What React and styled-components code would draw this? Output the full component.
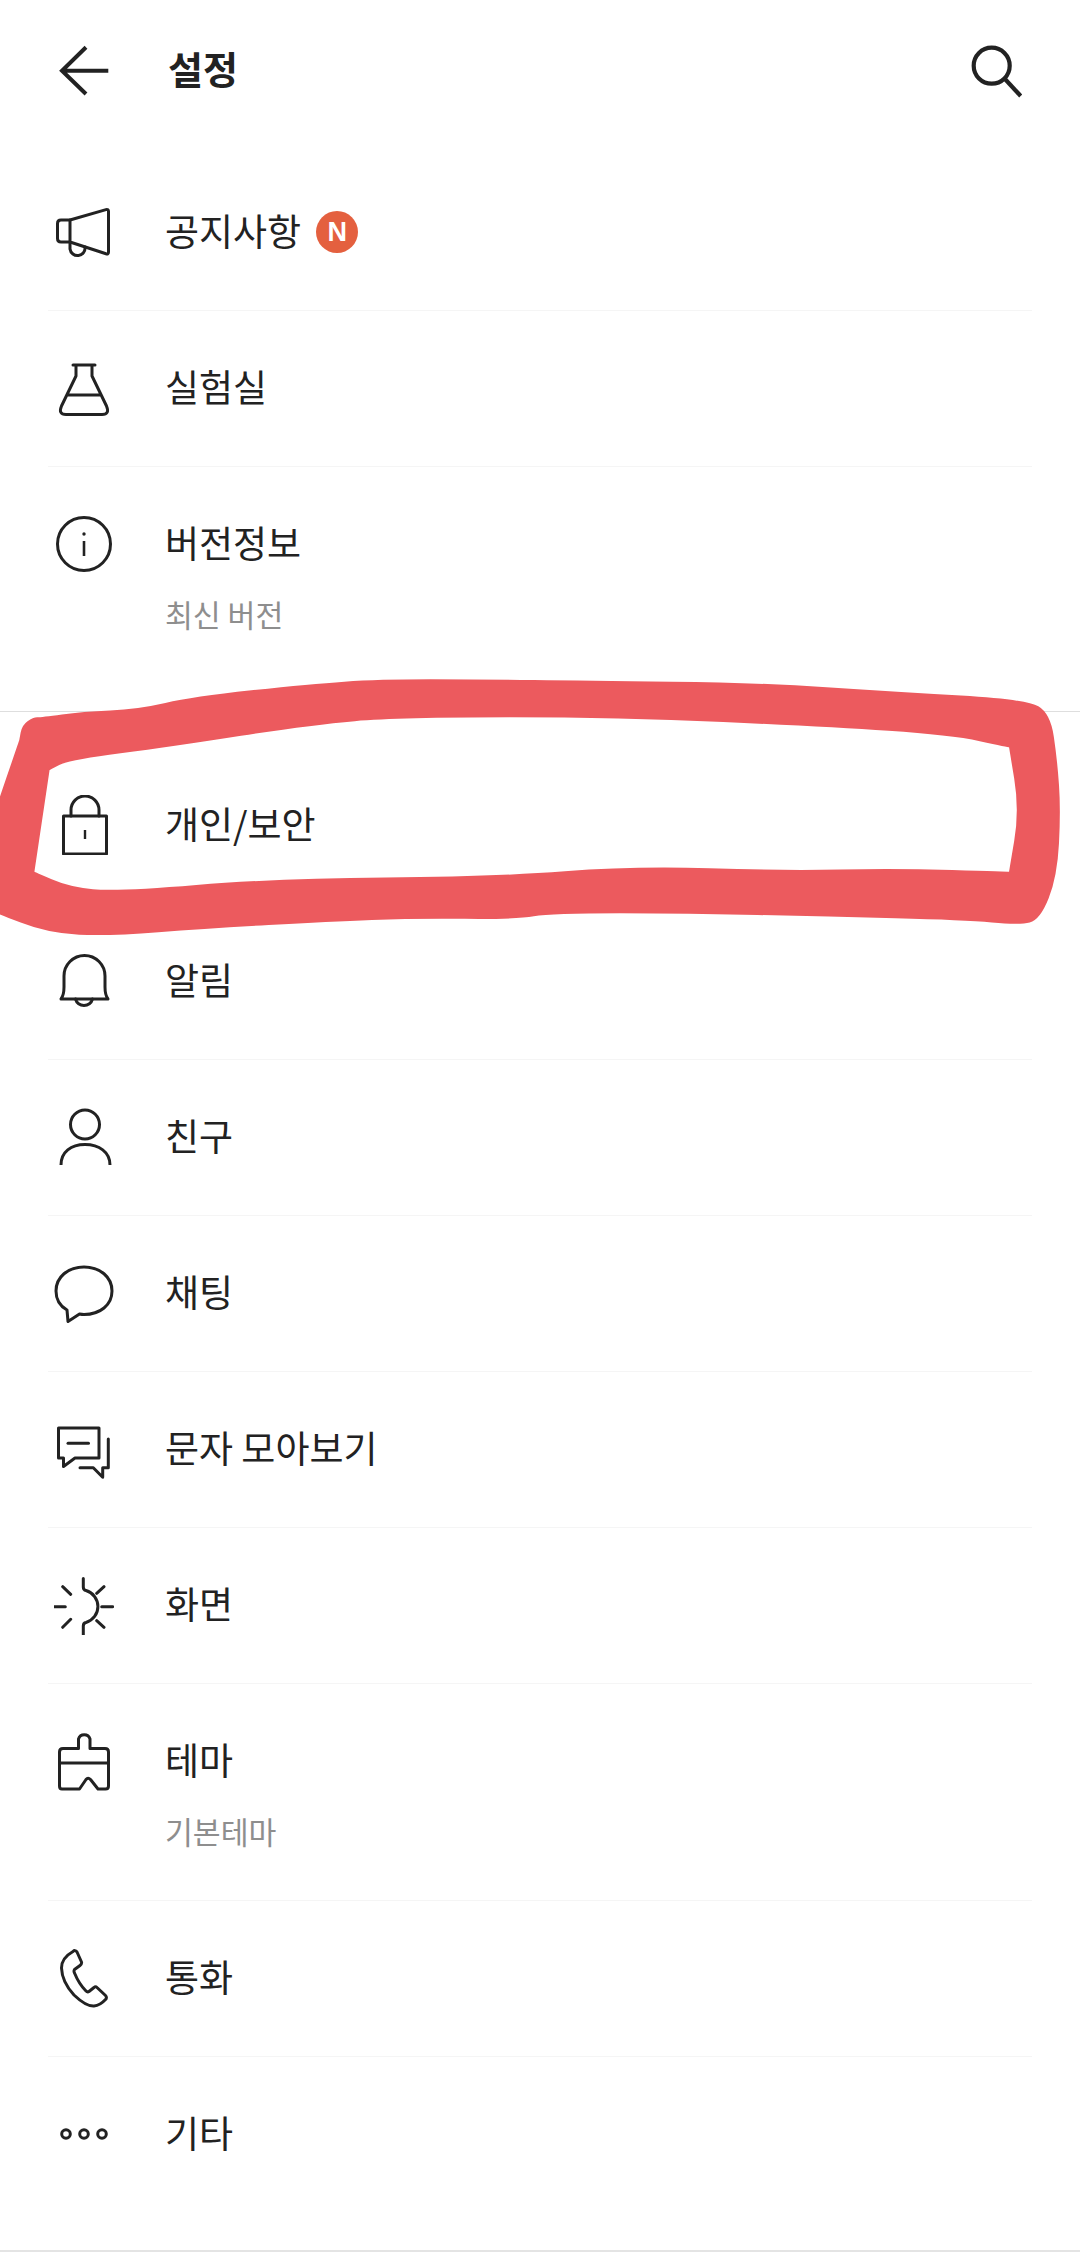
import React from "react";
import styled, { createGlobalStyle } from "styled-components";

const Global = createGlobalStyle`
  html, body { margin: 0; padding: 0; background: #fff; }
  body { font-family: "Noto Sans CJK KR", "Noto Sans", sans-serif; color: #222; }
`;

const Page = styled.div`
  position: relative;
  width: 1080px;
  height: 2257px;
  overflow: hidden;
  background: #fff;
`;

const Header = styled.header`
  display: flex;
  align-items: center;
  height: 140px;
  padding: 0 58px 0 54px;
  box-sizing: border-box;
`;

const HeaderTitle = styled.h1`
  flex: 1;
  margin: 0 0 4px 54px;
  font-size: 38px;
  line-height: 60px;
  font-weight: 700;
  color: #222;
`;

const Section = styled.section`
  padding: ${(p) => p.$top}px 48px ${(p) => p.$bottom}px;
  border-bottom: ${(p) => p.$line}px solid ${(p) => p.$lineColor};
`;

const Row = styled.div`
  display: flex;
  align-items: flex-start;
  box-sizing: border-box;
  height: ${(p) => (p.$sub ? 217 : 156)}px;
  padding: 47px 0 0 6px;
  border-bottom: ${(p) => (p.$last ? "none" : "1px solid #f5f5f5")};
`;

const Icon = styled.svg`
  flex: none;
  width: 60px;
  height: 60px;
  fill: none;
  stroke: #222;
  stroke-width: 3;
  stroke-linecap: round;
  stroke-linejoin: round;
`;

const HeaderIcon = styled(Icon)`
  stroke-width: ${(p) => p.$weight};
  stroke-linecap: butt;
  stroke-linejoin: miter;
`;

const Body = styled.div`
  margin-left: 51px;
`;

const TitleLine = styled.div`
  display: flex;
  align-items: center;
  box-sizing: border-box;
  height: 60px;
  padding-bottom: 4px;
  font-size: 37px;
  line-height: 56px;
  color: #222;
`;

const Badge = styled.span`
  display: flex;
  align-items: center;
  justify-content: center;
  width: 42px;
  height: 42px;
  margin: 4px 0 0 15px;
  border-radius: 50%;
  background: #e4603f;
  color: #fff;
  font-family: "Liberation Sans", sans-serif;
  font-size: 27px;
  font-weight: 700;
`;

const Sub = styled.div`
  margin-top: 20px;
  font-size: 30.3px;
  line-height: 40px;
  color: #8e8e8e;
`;

const Scribble = styled.svg`
  position: absolute;
  left: 0;
  top: 660px;
  width: 1080px;
  height: 300px;
  pointer-events: none;
`;

const outer = [
  [28, 240], [32, 195], [48, 172], [60, 172], [120, 155], [200, 148], [280, 110], [450, 72], [550, 58], [700, 58], [850, 62], [1100, 68],
  [1300, 95], [1490, 118], [1525, 160], [1535, 300], [1540, 450], [1535, 650], [1510, 780], [1480, 795], [1400, 780],
  [1200, 770], [1000, 760], [800, 760], [750, 778], [600, 775], [480, 785], [300, 805], [160, 828], [70, 820], [-10, 755],
  [-10, 755], [-10, 470], [-10, 470], [28, 240],
];
const inner = [
  [72, 330], [72, 330], [100, 300], [250, 260], [450, 195], [580, 172], [900, 172], [1200, 200], [1380, 225],
  [1465, 262], [1465, 262], [1480, 450], [1465, 635], [1465, 635], [1300, 625], [1140, 632], [920, 618], [720, 650], [400, 655],
  [170, 695], [100, 680], [50, 635], [50, 635],
];

const smooth = (pts) => {
  const mid = (a, b) => [(a[0] + b[0]) / 2, (a[1] + b[1]) / 2];
  let d = `M${mid(pts[pts.length - 1], pts[0]).join(" ")}`;
  pts.forEach((p, i) => {
    const m = mid(p, pts[(i + 1) % pts.length]);
    d += ` Q${p[0]} ${p[1]} ${m[0]} ${m[1]}`;
  });
  return d + " Z";
};

const icons = {
  megaphone: (
    <>
      <path d="M16 18 L52 7.6 Q54.5 7 54.5 9.5 V50 Q54.5 52.5 52 51.8 L16 40 Z" />
      <path d="M16 18 H7 Q3.5 18 3.5 21.5 V36.5 Q3.5 40 7 40 H16" />
      <path d="M16 40 V47 A7.5 7.5 0 0 0 31 45" />
    </>
  ),
  flask: (
    <path d="M19 7 H41 M22 7 V18 L7.5 48 Q4 56.5 12 56.5 H48 Q56 56.5 52.5 48 L38 18 V7 M13 37 H47" />
  ),
  info: (
    <>
      <circle cx="30" cy="30" r="26.5" />
      <path d="M30 27 V42" strokeWidth="2.6" strokeLinecap="butt" />
      <circle cx="30" cy="20" r="1.7" fill="#222" stroke="none" />
    </>
  ),
  lock: (
    <>
      <path d="M9.5 21 H52.5 V59 H9.5 Z" />
      <path d="M17 21 V15 A14 14 0 0 1 45 15 V21" />
      <path d="M31 35 V44" strokeWidth="2.4" strokeLinecap="butt" />
    </>
  ),
  bell: (
    <>
      <path d="M7 48 Q10 44 10 36 V25 A20.5 20.5 0 0 1 51 25 V36 Q51 44 54 48 Z" />
      <path d="M21.5 48 A8.8 8.8 0 0 0 38.5 48" />
    </>
  ),
  person: (
    <>
      <circle cx="31" cy="17.5" r="14.5" />
      <path d="M7 58 C7 45 17 37.5 31 37.5 S56 45 56 58" strokeLinecap="butt" />
    </>
  ),
  chat: (
    <path d="M13 47 C5 42.5 2 36 2 28 C2 14 14 4 30 4 C46 4 58 14 58 28 C58 42 46 51.5 30 51.5 Q28 51.5 25.5 51 L14 58.5 Z" />
  ),
  messages: (
    <>
      <path d="M4.5 9 H45 V39 H21 L9.5 47.5 V39 H4.5 Z" />
      <path d="M14 24.3 H34.5" />
      <path d="M54.3 20 V48.7 H48.7 V58.3 L39.3 48.7 H26" />
    </>
  ),
  sun: (
    <path d="M29.3 3.5 V12 Q29.3 15 32 15.5 A16.7 16.7 0 0 1 32 47.5 Q29.3 48 29.3 51 V61 M47.7 31.7 H58.7 M42.7 18.3 L50 11.7 M42.7 45.7 L50 52.3 M0.5 31.7 H11.3 M8.7 11.7 L16.7 19.3 M8.7 52.3 L16.7 44.3" />
  ),
  brush: (
    <path d="M24.5 17.5 V8 A6 6 0 0 1 36 8 V17.5 H51 Q54.5 17.5 54.5 21 V55 Q54.5 58 51.5 58 H44 L36.5 48.5 Q34 46 32 48.5 L25.5 58 H8 Q5.5 58 5.5 55 V21 Q5.5 17.5 9 17.5 Z M5.5 32 H54.5" />
  ),
  phone: (
    <path d="M19 3.5 Q21 1.5 23 4 L27.5 14 Q28 16 26 17.5 L20.5 21.5 Q19.5 23 20.5 25 Q25 36 32 43 Q33.5 44.5 35 43.5 L40 39.5 Q41.5 38 43 39.5 L51.5 47.5 Q53 49 52 51 Q46 57.5 40 58 Q32 58.5 20 47 Q8 34 7.5 20 Q7.5 10 19 3.5 Z" />
  ),
  more: (
    <>
      <circle cx="12" cy="30" r="4.3" />
      <circle cx="30" cy="30" r="4.3" />
      <circle cx="48" cy="30" r="4.3" />
    </>
  ),
};

const first = [
  { icon: "megaphone", title: "공지사항", badge: "N" },
  { icon: "flask", title: "실험실" },
  { icon: "info", title: "버전정보", sub: "최신 버전" },
];

const second = [
  { icon: "lock", title: "개인/보안" },
  { icon: "bell", title: "알림" },
  { icon: "person", title: "친구" },
  { icon: "chat", title: "채팅" },
  { icon: "messages", title: "문자 모아보기" },
  { icon: "sun", title: "화면" },
  { icon: "brush", title: "테마", sub: "기본테마" },
  { icon: "phone", title: "통화" },
  { icon: "more", title: "기타" },
];

const SettingRow = ({ item, last }) => (
  <Row $sub={!!item.sub} $last={last}>
    <Icon viewBox="0 0 60 60">{icons[item.icon]}</Icon>
    <Body>
      <TitleLine>
        {item.title}
        {item.badge && <Badge>{item.badge}</Badge>}
      </TitleLine>
      {item.sub && <Sub>{item.sub}</Sub>}
    </Body>
  </Row>
);

export default function App() {
  return (
    <Page>
      <Global />
      <Header>
        <HeaderIcon viewBox="0 0 60 60" $weight={4}>
          <path d="M32 7.3 L8 30.7 L32 54 M8 30.7 H54.3" />
        </HeaderIcon>
        <HeaderTitle>설정</HeaderTitle>
        <HeaderIcon viewBox="0 0 60 60" $weight={4.2}>
          <circle cx="29.7" cy="25.7" r="18" />
          <path d="M42.5 38.5 L58.7 56" />
        </HeaderIcon>
      </Header>
      <Section $top={15} $bottom={27} $line={1} $lineColor="#dedede">
        {first.map((item, i) => (
          <SettingRow key={item.title} item={item} last={i === first.length - 1} />
        ))}
      </Section>
      <Section $top={36} $bottom={37} $line={2} $lineColor="#e4e4e4">
        {second.map((item, i) => (
          <SettingRow key={item.title} item={item} last={i === second.length - 1} />
        ))}
      </Section>
      <Scribble viewBox="0 0 1568 900" preserveAspectRatio="none">
        <path d={`${smooth(outer)} ${smooth(inner)}`} fill="#ec5a5e" fillRule="evenodd" />
      </Scribble>
    </Page>
  );
}
